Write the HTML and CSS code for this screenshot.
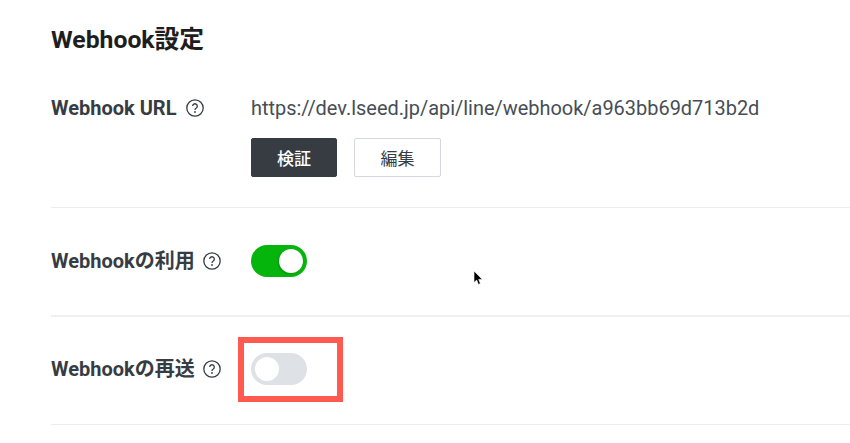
FILE: index.html
```html
<!DOCTYPE html>
<html lang="ja">
<head>
  <meta charset="UTF-8">
  <title>Webhook設定</title>
  <link rel="stylesheet" href="styles.css">
</head>
<body>
  <h1 class="title">Webhook設定</h1>

  <div class="row row-url">
    <div class="label">Webhook URL
      <svg class="help" viewBox="0 0 18 18"><circle cx="9" cy="9" r="8.2"/><path d="M6.7 7.1a2.3 2.3 0 1 1 3.6 1.9c-.9.5-1.3 1-1.3 1.9"/><circle class="dot" cx="9" cy="13" r=".9"/></svg>
    </div>
    <div class="value">
      <div class="url">https://dev.lseed.jp/api/line/webhook/a963bb69d713b2d</div>
      <div class="buttons">
        <button class="btn btn-dark">検証</button>
        <button class="btn">編集</button>
      </div>
    </div>
  </div>

  <div class="row row-toggle">
    <div class="label">Webhookの利用
      <svg class="help" viewBox="0 0 18 18"><circle cx="9" cy="9" r="8.2"/><path d="M6.7 7.1a2.3 2.3 0 1 1 3.6 1.9c-.9.5-1.3 1-1.3 1.9"/><circle class="dot" cx="9" cy="13" r=".9"/></svg>
    </div>
    <div class="value"><span class="toggle on"><span class="knob"></span></span></div>
  </div>

  <div class="row row-toggle row-last">
    <div class="label">Webhookの再送
      <svg class="help" viewBox="0 0 18 18"><circle cx="9" cy="9" r="8.2"/><path d="M6.7 7.1a2.3 2.3 0 1 1 3.6 1.9c-.9.5-1.3 1-1.3 1.9"/><circle class="dot" cx="9" cy="13" r=".9"/></svg>
    </div>
    <div class="value"><span class="toggle"><span class="knob"></span></span></div>
    <span class="highlight"></span>
  </div>

  <svg class="cursor" viewBox="0 0 11 16"><path d="M1 1v11.5l2.7-2.4 1.7 4.3 2-.8-1.7-4.2h3.6z"/></svg>
</body>
</html>
```

FILE: styles.css
```css
html, body {
  margin: 0;
  height: 443px;
  overflow: hidden;
}
body {
  position: relative;
  padding-left: 51px;
  background: #ffffff;
  font-family: Roboto, "Noto Sans CJK JP", sans-serif;
  color: #373c43;
}
.title {
  margin: 0;
  padding-top: 25px;
  height: 58px;
  font-size: 24.75px;
  line-height: 30px;
  font-weight: 700;
  color: #1e1e1e;
}
.row {
  position: relative;
  display: flex;
  border-bottom: 1px solid #ebedef;
}
.row-url {
  align-items: flex-start;
  height: 124px;
}
.row-toggle {
  align-items: center;
  box-sizing: border-box;
  height: 109px;
  padding-bottom: 1px;
  border-bottom: 2px solid #eeeff1;
}
.row-last {
  height: 108px;
  padding-bottom: 3px;
  border-bottom: 1px solid #ebedef;
}
.label {
  width: 200px;
  flex: none;
  display: flex;
  align-items: center;
  gap: 9px;
  font-size: 20px;
  font-weight: 700;
  line-height: 50px;
}
.row-toggle .label {
  gap: 8px;
}
.help {
  width: 18px;
  height: 18px;
  fill: none;
  stroke: #373c43;
  stroke-width: 1.3;
}
.help .dot {
  fill: #373c43;
  stroke: none;
}
.url {
  font-size: 19.95px;
  line-height: 50px;
  color: #474d55;
}
.buttons {
  display: flex;
  gap: 17px;
  margin-top: 5px;
}
.btn {
  width: 87px;
  height: 39px;
  padding: 0;
  background: #ffffff;
  border: 1px solid #d5d8dc;
  border-radius: 2px;
  font-family: inherit;
  font-size: 17px;
  color: #373c43;
}
.btn-dark {
  width: 86px;
  background: #373c43;
  border-color: #373c43;
  color: #ffffff;
  font-weight: 500;
}
.toggle {
  display: flex;
  justify-content: flex-start;
  box-sizing: border-box;
  width: 56px;
  height: 32px;
  padding: 4px;
  border-radius: 16px;
  background: #dee1e5;
}
.toggle.on {
  justify-content: flex-end;
  background: #06b50b;
}
.knob {
  width: 24px;
  height: 24px;
  border-radius: 50%;
  background: #ffffff;
}
.toggle.on .knob {
  box-shadow: -1px 1px 2px rgba(0, 0, 0, 0.2);
}
/* red annotation box drawn over the screenshot */
.highlight {
  position: absolute;
  left: 187px;
  top: 20px;
  width: 93px;
  height: 53px;
  border: 6px solid #ff5a4f;
}
.cursor {
  position: absolute;
  left: 473px;
  top: 270px;
  width: 11px;
  height: 16px;
  fill: #000000;
  stroke: #ffffff;
  stroke-width: 0.6;
}
```
